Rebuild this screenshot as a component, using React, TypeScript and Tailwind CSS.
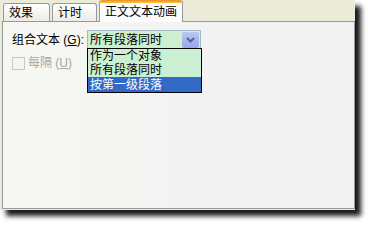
import React from 'react';

const font = { fontFamily: '"Liberation Sans", "Noto Sans CJK SC", sans-serif' };

const Tab: React.FC<{ label: string; width: string; active?: boolean }> = ({ label, width, active }) => {
    if (active) {
        return (
            <div className={`relative z-10 -mb-px flex h-[22px] flex-col overflow-hidden rounded-t-[3px] border-x border-[#919b9c] bg-[#fcfcfe] ${width}`}>
                <div className="h-[3px] shrink-0 bg-gradient-to-b from-[#e68b2c] to-[#ffc83c]" />
                <div className="flex flex-1 items-center justify-center pb-px text-[12px] leading-none text-black">{label}</div>
            </div>
        );
    }
    return (
        <div className={`flex h-[18px] items-center rounded-t-[3px] border-x border-t border-[#919b9c] bg-gradient-to-b from-[#ffffff] to-[#ecebe6] pl-[5px] text-[12px] leading-none text-black ${width}`}>
            {label}
        </div>
    );
};

const App: React.FC = () => {
    return (
        <div className="h-[224px] w-[368px] overflow-hidden bg-white" style={font}>
            <div className="flex h-[210px] w-[355px] flex-col bg-[#ecead9] shadow-[6px_6px_5px_rgba(0,0,0,0.9)]">
                {/* tab strip */}
                <div className="flex h-[21px] items-end gap-[2px] pl-[3px]">
                    <Tab label="效果" width="w-[47px]" />
                    <Tab label="计时" width="w-[45px]" />
                    <Tab label="正文文本动画" width="w-[84px]" active />
                </div>

                {/* tab page */}
                <div className="ml-[2px] h-[188px] w-[353px] border border-[#919b9c] bg-gradient-to-r from-[#f7f7f2] via-[#f3f3f3] to-[#f2f2f2] pl-[9px] pt-[8px]">
                    <div className="flex items-center">
                        <span className="w-[75px] text-[12px] leading-[14px] text-black">
                            组合文本 (<span className="underline">G</span>):
                        </span>
                        <div className="relative">
                            <div className="flex h-[19px] w-[114px] items-center justify-between border border-[#a5b9c9] bg-[#cdeed1] pl-[2px] pr-px">
                                <span className="text-[12px] leading-[14px] text-black">所有段落同时</span>
                                <div className="flex h-[16px] w-[17px] items-center justify-center rounded-[2px] bg-gradient-to-b from-[#b9c6f2] to-[#98a8e6]">
                                    <svg width="9" height="6" viewBox="0 0 9 6">
                                        <path d="M1 1 L4.5 4.5 L8 1" fill="none" stroke="#4d61a8" strokeWidth="2" />
                                    </svg>
                                </div>
                            </div>
                            {/* open list */}
                            <div className="absolute left-0 top-[18px] z-20 flex w-[115px] flex-col border border-black bg-[#cbefd2] text-[12px] leading-[14px]">
                                <div className="h-[14px] pl-[2px] text-black">作为一个对象</div>
                                <div className="h-[14px] pl-[2px] text-black">所有段落同时</div>
                                <div className="h-[15px] bg-[#316ac5] pl-[2px] pt-px text-white">按第一级段落</div>
                            </div>
                        </div>
                    </div>

                    <div className="mt-[7px] flex items-center gap-[3px]">
                        <div className="h-[13px] w-[13px] border border-[#cac8bb] bg-[#f4f4f2]" />
                        <span className="text-[12px] leading-[14px] text-[#a6a6a6]">
                            每隔 (<span className="underline">U</span>)
                        </span>
                    </div>
                </div>
            </div>
        </div>
    );
};

export default App;
